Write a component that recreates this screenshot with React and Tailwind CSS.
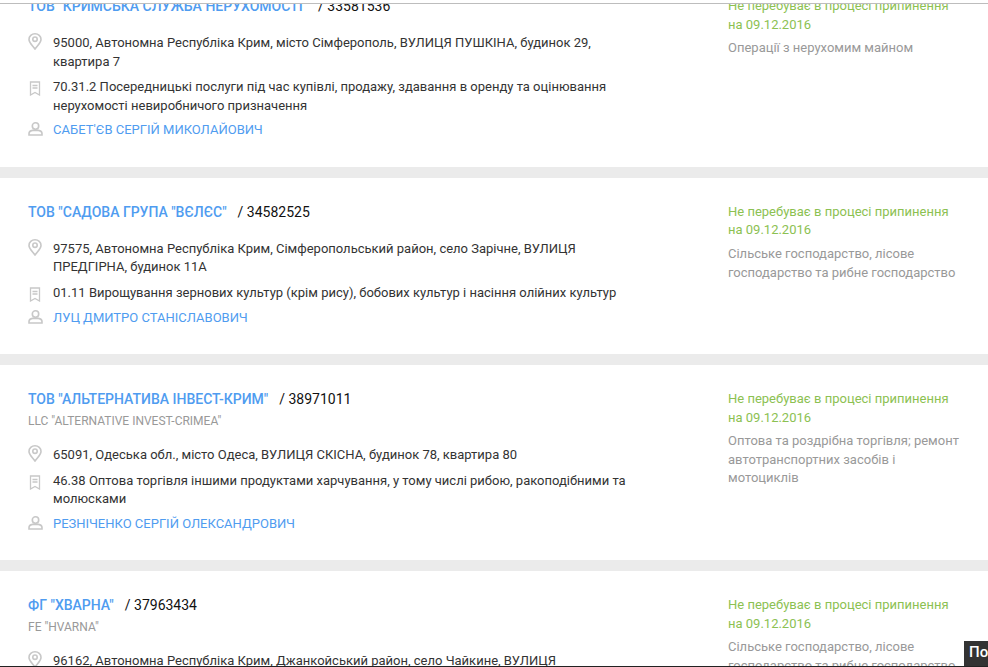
const companies = [
  {
    name: 'ТОВ "КРИМСЬКА СЛУЖБА НЕРУХОМОСТІ"',
    code: "33581536",
    address: "95000, Автономна Республіка Крим, місто Сімферополь, ВУЛИЦЯ ПУШКІНА, будинок 29, квартира 7",
    activity: "70.31.2 Посередницькі послуги під час купівлі, продажу, здавання в оренду та оцінювання нерухомості невиробничого призначення",
    person: "САБЕТ'ЄВ СЕРГІЙ МИКОЛАЙОВИЧ",
    sector: "Операції з нерухомим майном",
  },
  {
    name: 'ТОВ "САДОВА ГРУПА "ВЄЛЄС"',
    code: "34582525",
    address: "97575, Автономна Республіка Крим, Сімферопольський район, село Зарічне, ВУЛИЦЯ ПРЕДГІРНА, будинок 11А",
    activity: "01.11 Вирощування зернових культур (крім рису), бобових культур і насіння олійних культур",
    person: "ЛУЦ ДМИТРО СТАНІСЛАВОВИЧ",
    sector: "Сільське господарство, лісове господарство та рибне господарство",
  },
  {
    name: 'ТОВ "АЛЬТЕРНАТИВА ІНВЕСТ-КРИМ"',
    code: "38971011",
    latin: 'LLC "ALTERNATIVE INVEST-CRIMEA"',
    address: "65091, Одеська обл., місто Одеса, ВУЛИЦЯ СКІСНА, будинок 78, квартира 80",
    activity: "46.38 Оптова торгівля іншими продуктами харчування, у тому числі рибою, ракоподібними та молюсками",
    person: "РЕЗНІЧЕНКО СЕРГІЙ ОЛЕКСАНДРОВИЧ",
    sector: "Оптова та роздрібна торгівля; ремонт автотранспортних засобів і мотоциклів",
  },
  {
    name: 'ФГ "ХВАРНА"',
    code: "37963434",
    latin: 'FE "HVARNA"',
    address: "96162, Автономна Республіка Крим, Джанкойський район, село Чайкине, ВУЛИЦЯ ПРИВОКЗАЛЬНА, будинок 5",
    activity: "01.11 Вирощування зернових культур (крім рису), бобових культур і насіння олійних культур",
    person: "",
    sector: "Сільське господарство, лісове господарство та рибне господарство",
  },
];

function PinIcon() {
  return (
    <svg className="-mt-[1px]" width="14" height="17" viewBox="0 0 14 17" fill="none" stroke="#c8c8c8" strokeWidth="1.6">
      <path d="M7 16 C4.5 12.4 1 9.6 1 6.4 A6 5.6 0 0 1 13 6.4 C13 9.6 9.5 12.4 7 16 Z" />
      <circle cx="7" cy="6.2" r="2.2" />
    </svg>
  );
}

function BookmarkIcon() {
  return (
    <svg className="mt-[3px] ml-[1px]" width="12" height="15" viewBox="0 0 12 15" fill="none" stroke="#c8c8c8" strokeWidth="1.3">
      <path d="M1.5 1 H10.5 V14 L6 11.5 L1.5 14 Z" />
      <path d="M3.5 4.5 H8.5 M3.5 7 H8.5" />
    </svg>
  );
}

function PersonIcon() {
  return (
    <svg className="mt-[1px]" width="15" height="14" viewBox="0 0 15 14" fill="none" stroke="#c8c8c8" strokeWidth="1.6">
      <ellipse cx="7.5" cy="4" rx="3.2" ry="3.2" />
      <path d="M1 13 V11.5 C1 9.5 3 8.6 4.6 8.4 H10.4 C12 8.6 14 9.5 14 11.5 V13 Z" />
    </svg>
  );
}

function Row({ icon, children, className }) {
  return (
    <div className={"flex " + className}>
      <div className="flex w-[25px] shrink-0 items-start">{icon}</div>
      <div className="w-[585px]">{children}</div>
    </div>
  );
}

function CompanyCard({ company }) {
  return (
    <article className="flex bg-white pt-[24px] pb-[27px] pl-[28px]">
      <div className="w-[700px] shrink-0">
        <h2 className="flex text-[14px] leading-[20px] font-medium">
          <span className="text-[#4f9cf0]">{company.name}</span>
          <span className="ml-[11px] font-normal text-[#111111]">/ {company.code}</span>
        </h2>
        {company.latin && (
          <div className="mt-[3px] text-[12px] leading-[18px] text-[#999999]">{company.latin}</div>
        )}
        <Row icon={<PinIcon />} className={company.latin ? "mt-[16px]" : "mt-[18px]"}>
          {company.address}
        </Row>
        <Row icon={<BookmarkIcon />} className="mt-[7px]">{company.activity}</Row>
        <Row icon={<PersonIcon />} className="mt-[6px] text-[#4f9cf0]">{company.person}</Row>
      </div>
      <div className="w-[232px] pt-[1px]">
        <div className="text-[#8cc152]">Не перебуває в процесі припинення на 09.12.2016</div>
        <div className="mt-[5px] text-[#999999]">{company.sector}</div>
      </div>
    </article>
  );
}

export default function App() {
  return (
    <div className="relative h-[667px] overflow-hidden bg-white font-['Roboto',sans-serif] text-[13px] leading-[18.57px] text-[#333333]">
      <div className="-mt-[28px] flex flex-col gap-[11px] bg-[#ebebeb]">
        {companies.map((company) => (
          <CompanyCard key={company.code} company={company} />
        ))}
      </div>
      <div className="absolute inset-x-0 top-0 h-[4px] border-b border-[#bdbdbd] bg-white" />
      <div className="absolute right-0 bottom-0 h-[26px] w-[24px] overflow-hidden bg-[#333333] pt-[2px] pl-[5px] text-[15px] font-medium whitespace-nowrap text-white">
        Пошук
      </div>
      <div className="absolute inset-x-0 bottom-0 h-[1px] bg-[#222222]" />
    </div>
  );
}
